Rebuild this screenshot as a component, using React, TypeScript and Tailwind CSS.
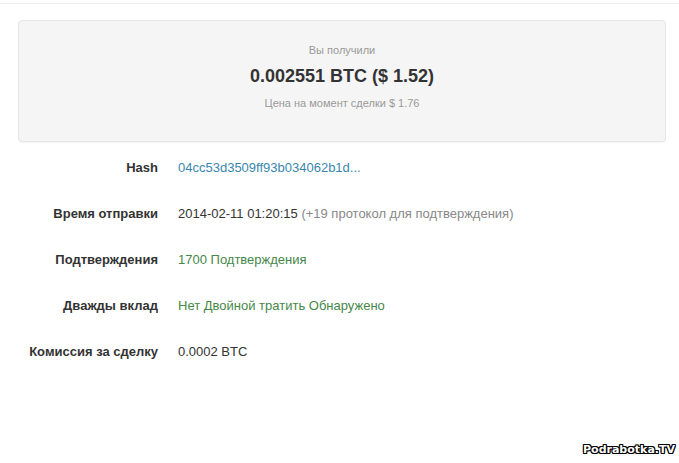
import React from "react";

const rows: { label: string; value: React.ReactNode }[] = [
  {
    label: "Hash",
    value: <span className="text-[#3a87ad]">04cc53d3509ff93b034062b1d...</span>,
  },
  {
    label: "Время отправки",
    value: (
      <span className="text-[#333]">
        2014-02-11 01:20:15{" "}
        <span className="text-[#888]">(+19 протокол для подтверждения)</span>
      </span>
    ),
  },
  {
    label: "Подтверждения",
    value: <span className="text-[#468847]">1700 Подтверждения</span>,
  },
  {
    label: "Дважды вклад",
    value: <span className="text-[#468847]">Нет Двойной тратить Обнаружено</span>,
  },
  {
    label: "Комиссия за сделку",
    value: <span className="text-[#333]">0.0002 BTC</span>,
  },
];

export default function App() {
  return (
    <div
      className="relative w-[679px] h-[463px] bg-white overflow-hidden"
      style={{ fontFamily: '"Liberation Sans", Arial, sans-serif' }}
    >
      <div className="h-[3px]" />
      <div className="h-px bg-[#ececec]" />
      <div className="pt-[16px] pl-[18px] pr-[13px]">
        <div className="h-[122px] rounded-[4px] border border-[#e6e6e6] bg-[#f5f5f5] flex flex-col items-center shadow-[0_1px_1px_rgba(0,0,0,0.04)]">
          <div className="mt-[22px] text-[11px] leading-[14px] text-[#999]">Вы получили</div>
          <div className="mt-[6px] text-[18px] leading-[26px] font-bold text-[#333]">
            0.002551 BTC ($ 1.52)
          </div>
          <div className="mt-[7px] text-[11px] leading-[14px] text-[#999]">
            Цена на момент сделки $ 1.76
          </div>
        </div>
      </div>
      <div className="mt-[3px] flex flex-col">
        {rows.map((r) => (
          <div key={r.label} className="h-[46px] flex items-center text-[13px]">
            <div className="w-[158px] text-right font-bold text-[#333] whitespace-nowrap">
              {r.label}
            </div>
            <div className="ml-[20px] whitespace-nowrap">{r.value}</div>
          </div>
        ))}
      </div>
      <div
        className="absolute right-[4px] bottom-[5px] text-[11px] font-bold text-white"
        style={{
          fontFamily: '"DejaVu Sans", Verdana, sans-serif',
          textShadow:
            "1px 0 0 #000, -1px 0 0 #000, 0 1px 0 #000, 0 -1px 0 #000, 1px 1px 0 #000, -1px -1px 0 #000, 1px -1px 0 #000, -1px 1px 0 #000",
        }}
      >
        Podrabotka.TV
      </div>
    </div>
  );
}
